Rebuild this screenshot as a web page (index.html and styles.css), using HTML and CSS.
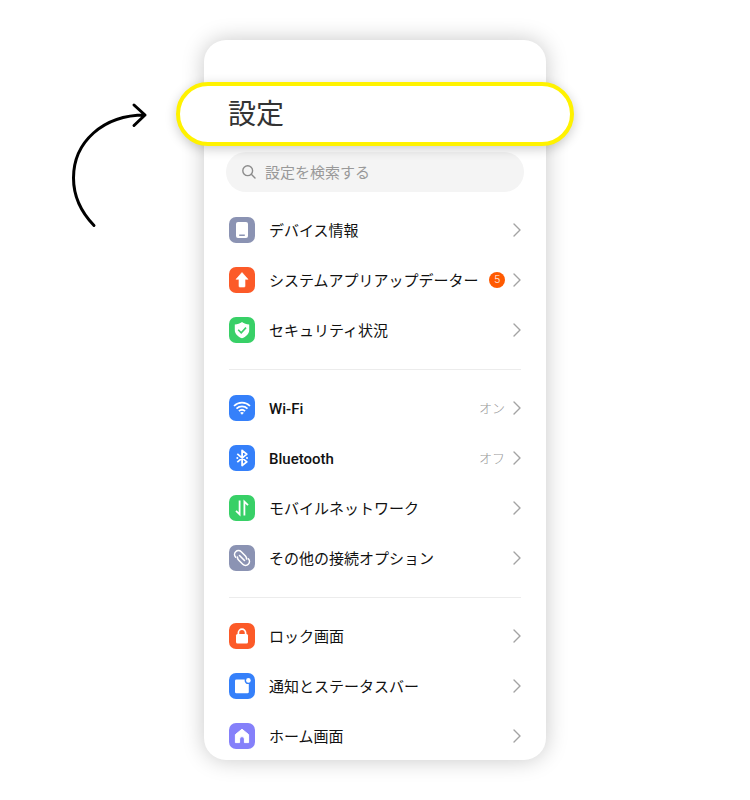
FILE: index.html
```html
<!DOCTYPE html>
<html lang="ja">
<head>
    <meta charset="UTF-8">
    <meta name="viewport" content="width=device-width, initial-scale=1.0">
    <title>設定</title>
    <link rel="stylesheet" href="styles.css">
</head>
<body>
    <main class="stage">
        <svg class="arrow" width="80" height="130" viewBox="0 0 80 130" aria-hidden="true">
            <path d="M26 125.5C13 112 5.5 96 5.5 78C5.5 42 35 15 77 15M66 5L77 15L66 25.5"/>
        </svg>

        <div class="phone">
            <div class="highlight">
                <h1>設定</h1>
            </div>

            <label class="search">
                <svg width="16" height="16" viewBox="0 0 16 16" aria-hidden="true">
                    <circle cx="6.7" cy="6.7" r="4.9"/>
                    <path d="M10.3 10.3L14 14"/>
                </svg>
                <input type="search" placeholder="設定を検索する" aria-label="設定を検索する">
            </label>

            <nav class="settings">
                <!-- Device -->
                <div class="group">
                    <a class="row" href="#">
                        <svg class="icon gray" viewBox="0 0 26 26"><rect x="7" y="5" width="12" height="16" rx="2" fill="#fff"/><path d="M10.2 18.3H15.8" stroke="#8b93b3" stroke-width="1.4"/></svg>
                        <span class="name">デバイス情報</span>
                        <svg class="chevron" viewBox="0 0 8 14"><path d="M1 1L7 7L1 13"/></svg>
                    </a>
                    <a class="row" href="#">
                        <svg class="icon orange" viewBox="0 0 26 26"><path d="M13 5.5L19 12.3H16V19.3Q16 20 15.3 20H10.7Q10 20 10 19.3V12.3H7Z" fill="#fff" stroke="#fff" stroke-width=".6" stroke-linejoin="round"/></svg>
                        <span class="name">システムアプリアップデーター</span>
                        <span class="badge">5</span>
                        <svg class="chevron" viewBox="0 0 8 14"><path d="M1 1L7 7L1 13"/></svg>
                    </a>
                    <a class="row" href="#">
                        <svg class="icon green" viewBox="0 0 26 26"><path d="M13 5C15 6.5 17.5 7.3 20.2 7.5V13C20.2 17 17 19.8 13 21.3C9 19.8 5.8 17 5.8 13V7.5C8.5 7.3 11 6.5 13 5Z" fill="#fff"/><path d="M9.2 12.8L12.2 15.8L17 10.6" fill="none" stroke="#38d067" stroke-width="1.6"/></svg>
                        <span class="name">セキュリティ状況</span>
                        <svg class="chevron" viewBox="0 0 8 14"><path d="M1 1L7 7L1 13"/></svg>
                    </a>
                </div>

                <!-- Connections -->
                <div class="group">
                    <a class="row" href="#">
                        <svg class="icon blue" viewBox="0 0 26 26"><g fill="none" stroke="#fff" stroke-width="1.7"><path d="M5 11C9.6 6.6 16.4 6.6 21 11"/><path d="M7.5 13.6C10.7 10.6 15.3 10.6 18.5 13.6"/><path d="M9.9 16.2C11.7 14.5 14.3 14.5 16.1 16.2"/></g><path d="M11.1 17.7Q13 16.2 14.9 17.7L13 19.7Z" fill="#fff"/></svg>
                        <span class="name latin">Wi-Fi</span>
                        <span class="state">オン</span>
                        <svg class="chevron" viewBox="0 0 8 14"><path d="M1 1L7 7L1 13"/></svg>
                    </a>
                    <a class="row" href="#">
                        <svg class="icon blue" viewBox="0 0 26 26"><path d="M8.3 8.9L17.8 16.9L13.1 20.5V5.5L17.8 9.1L8.3 17.1" fill="none" stroke="#fff" stroke-width="1.8" stroke-linejoin="round"/><circle cx="8.3" cy="13" r="1" fill="#fff"/><circle cx="18" cy="13" r="1" fill="#fff"/></svg>
                        <span class="name latin">Bluetooth</span>
                        <span class="state">オフ</span>
                        <svg class="chevron" viewBox="0 0 8 14"><path d="M1 1L7 7L1 13"/></svg>
                    </a>
                    <a class="row" href="#">
                        <svg class="icon green" viewBox="0 0 26 26"><path d="M10.6 5.5V19.4L7 15.9M15.4 20.5V6.6L19 10.1" fill="none" stroke="#fff" stroke-width="1.8"/></svg>
                        <span class="name">モバイルネットワーク</span>
                        <svg class="chevron" viewBox="0 0 8 14"><path d="M1 1L7 7L1 13"/></svg>
                    </a>
                    <a class="row" href="#">
                        <svg class="icon gray" viewBox="0 0 26 26"><g transform="translate(13 13) rotate(45)" fill="none" stroke="#fff" stroke-width="1.6" stroke-linecap="round"><path d="M-3.5 0H3.5"/><path d="M-5 3.9A3.9 3.9 0 0 1 -5 -3.9H1A3.9 3.9 0 0 1 4 -2.5"/><path d="M5 -3.9A3.9 3.9 0 0 1 5 3.9H-1A3.9 3.9 0 0 1 -4 2.5"/></g></svg>
                        <span class="name">その他の接続オプション</span>
                        <svg class="chevron" viewBox="0 0 8 14"><path d="M1 1L7 7L1 13"/></svg>
                    </a>
                </div>

                <!-- Screen -->
                <div class="group">
                    <a class="row" href="#">
                        <svg class="icon orange" viewBox="0 0 26 26"><rect x="7" y="11" width="12" height="9.5" rx="1.5" fill="#fff"/><path d="M9.4 11.5V9.8A3.6 3.6 0 0 1 16.6 9.8V11.5" fill="none" stroke="#fff" stroke-width="1.7"/></svg>
                        <span class="name">ロック画面</span>
                        <svg class="chevron" viewBox="0 0 8 14"><path d="M1 1L7 7L1 13"/></svg>
                    </a>
                    <a class="row" href="#">
                        <svg class="icon blue" viewBox="0 0 26 26"><path d="M7.4 6.5H15.7A3.6 3.6 0 0 0 19.8 11V18.9Q19.8 20.3 18.4 20.3H7.4Q6 20.3 6 18.9V7.9Q6 6.5 7.4 6.5Z" fill="#fff"/><circle cx="19.4" cy="7.4" r="2.3" fill="#fff"/></svg>
                        <span class="name">通知とステータスバー</span>
                        <svg class="chevron" viewBox="0 0 8 14"><path d="M1 1L7 7L1 13"/></svg>
                    </a>
                    <a class="row" href="#">
                        <svg class="icon purple" viewBox="0 0 26 26"><path d="M13 6.2L19.6 11.6V19.6H15.4V16A2.4 2.4 0 0 0 10.6 16V19.6H6.4V11.6Z" fill="#fff" stroke="#fff" stroke-width="1" stroke-linejoin="round"/></svg>
                        <span class="name">ホーム画面</span>
                        <svg class="chevron" viewBox="0 0 8 14"><path d="M1 1L7 7L1 13"/></svg>
                    </a>
                </div>
            </nav>
        </div>
    </main>
</body>
</html>
```
FILE: styles.css
```css
* {
    box-sizing: border-box;
}
body {
    margin: 0;
    background: #fff;
    color: #111;
    font-family: Roboto, "Noto Sans CJK JP", sans-serif;
    font-size: 15px;
    line-height: 24px;
}
.stage {
    display: grid;
    grid-template-columns: 1fr minmax(auto, 342px) 1fr;
    padding: 40px 0;
}
.arrow {
    justify-self: end;
    margin: 60px 56px 0 0;
    fill: none;
    stroke: #000;
    stroke-width: 3;
    stroke-linecap: round;
    stroke-linejoin: round;
}
.phone {
    padding-top: 42px;
    border-radius: 22px;
    background: #fff;
    box-shadow: 0 0 22px rgba(0, 0, 0, 0.22);
}

/* Enlarged title */
.highlight {
    position: relative;
    display: flex;
    align-items: center;
    height: 64px;
    margin: 0 -28px;
    padding: 2px 48px 0;
    border: 4px solid #fff200;
    border-radius: 32px;
    background: #fff;
    box-shadow: 0 3px 12px rgba(0, 0, 0, 0.2);
}
h1 {
    margin: 0;
    color: #333;
    font-size: 28px;
    line-height: 40px;
    font-weight: 400;
}

.search {
    display: flex;
    align-items: center;
    gap: 8px;
    height: 40px;
    margin: 6px 22px 13px;
    padding: 0 15px;
    border-radius: 20px;
    background: #f4f4f4;
}
.search svg {
    flex: none;
    fill: none;
    stroke: #8c8c8c;
    stroke-width: 1.4;
    stroke-linecap: round;
}
.search input {
    flex: 1;
    min-width: 0;
    padding: 2px 0 0;
    border: 0;
    outline: 0;
    background: none;
    font: inherit;
}
.search input::placeholder {
    color: #999;
}

/* Settings list */
.settings {
    padding: 0 25px;
    margin-bottom: -1px;
}
.group + .group {
    margin-top: 14px;
    padding-top: 13px;
    border-top: 1px solid #ececec;
}
.row {
    display: flex;
    align-items: center;
    height: 50px;
    color: inherit;
    text-decoration: none;
}
.icon {
    flex: none;
    width: 26px;
    height: 26px;
    margin-right: 14px;
    border-radius: 7px;
}
.gray {
    background: #8b93b3;
}
.orange {
    background: #fc5a28;
}
.green {
    background: #38d067;
}
.blue {
    background: #3580fa;
}
.purple {
    background: #8580fa;
}
.name {
    flex: 1;
    padding-top: 2px;
    white-space: nowrap;
}
.latin {
    font-weight: 500;
}
.state {
    padding-top: 2px;
    color: #999;
    font-size: 13px;
    font-weight: 300;
}
.badge {
    width: 16px;
    height: 16px;
    border-radius: 50%;
    background: #ff5a00;
    color: #fff;
    font-size: 11px;
    font-weight: 300;
    line-height: 16px;
    text-align: center;
}
.chevron {
    flex: none;
    width: 8px;
    height: 14px;
    margin-left: 8px;
    fill: none;
    stroke: #a3a3a3;
    stroke-width: 1.4;
    stroke-linecap: round;
    stroke-linejoin: round;
}
```
